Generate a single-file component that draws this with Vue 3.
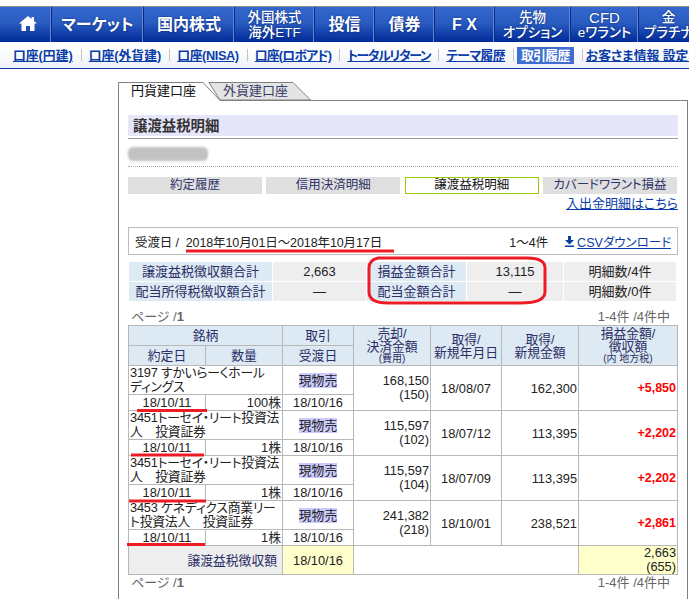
<template>
  <div class="page">
    <nav class="gnav">
      <a class="gnav-item home">
        <svg width="18" height="15" viewBox="0 0 18 15"><path d="M9 0 L12.500 3 V1 H15 V5 L18 7.500 H15.500 V15 H11 V10 H7 V15 H2.500 V7.500 H0 Z" fill="#fff"/></svg>
      </a>
      <a v-for="item in gnav" :key="item.lines[0]" class="gnav-item" :class="{ small: item.lines.length > 1 }">
        <span>
          <span v-for="(line, i) in item.lines" :key="line" class="line" :class="{ big: item.bigFirst && i === 0 }">{{ line }}</span>
        </span>
      </a>
    </nav>

    <div class="subnav">
      <a
        v-for="link in subnav"
        :key="link.label"
        class="sub-link"
        :class="{ active: link.active }"
        :style="{ letterSpacing: (link.ls || 0) + 'px' }"
      >{{ link.label }}</a>
    </div>

    <div class="tabs">
      <svg class="tab-shape" width="200" height="19" viewBox="0 0 200 19">
        <path d="M91 0.500 L175 0.500 L192.500 18 L102 18 Z" fill="#e4e4e4" stroke="#808080"/>
        <path d="M0.500 19 L0.500 0.500 L85 0.500 L102 18.500 L102 19 Z" fill="#fff"/>
        <path d="M0.500 19 L0.500 0.500 L85 0.500 L102 18.500" fill="none" stroke="#808080"/>
      </svg>
      <span class="tab on">円貨建口座</span>
      <span class="tab">外貨建口座</span>
    </div>

    <section class="panel">
      <h2 class="title">譲渡益税明細</h2>
      <div class="masked"></div>
      <div class="dots"></div>

      <div class="btns">
        <span class="btn">約定履歴</span>
        <span class="btn">信用決済明細</span>
        <span class="btn on">譲渡益税明細</span>
        <span class="btn">カバードワラント損益</span>
      </div>
      <div class="io-link"><a>入出金明細はこちら</a></div>

      <div class="period">
        <span class="period-date">受渡日 /&nbsp; 2018年10月01日～2018年10月17日</span>
        <span class="period-count">1～4件</span>
        <a class="csv">
          <svg width="9" height="11" viewBox="0 0 9 11"><path d="M3 0 H6 V4 H9 L4.500 8.500 L0 4 H3 Z M0 9.500 H9 V11 H0 Z" fill="#0b3da8"/></svg>
          <span class="csv-text">CSVダウンロード</span>
        </a>
      </div>

      <div class="summary">
        <template v-for="row in summary" :key="row[0]">
          <span class="s-label">{{ row[0] }}</span>
          <span class="s-val">{{ row[1] }}</span>
          <span class="s-label">{{ row[2] }}</span>
          <span class="s-val">{{ row[3] }}</span>
          <span class="s-val">{{ row[4] }}</span>
        </template>
      </div>

      <div class="pager"><span>ページ /<b>1</b></span><span class="pager-r">1-4件 /4件中</span></div>

      <table class="list">
        <colgroup>
          <col class="c77" /><col class="c77" /><col class="c71" /><col class="c77" /><col class="c71" /><col class="c77" /><col class="c99" />
        </colgroup>
        <thead>
          <tr class="h1">
            <th colspan="2"><div class="cell">銘柄</div></th>
            <th><div class="cell">取引</div></th>
            <th rowspan="2"><div class="cell">売却/<br />決済金額<br /><small>(費用)</small></div></th>
            <th rowspan="2"><div class="cell">取得/<br />新規年月日</div></th>
            <th rowspan="2"><div class="cell">取得/<br />新規金額</div></th>
            <th rowspan="2"><div class="cell">損益金額/<br />徴収額<br /><small>(内 地方税)</small></div></th>
          </tr>
          <tr class="h1">
            <th><div class="cell">約定日</div></th>
            <th><div class="cell">数量</div></th>
            <th><div class="cell">受渡日</div></th>
          </tr>
        </thead>
        <tbody v-for="r in rows" :key="r.acquired + r.cost">
          <tr class="r1">
            <td colspan="2" class="name"><div class="cell">{{ r.name[0] }}<br />{{ r.name[1] }}</div></td>
            <td class="mid"><mark>現物売</mark></td>
            <td rowspan="2" class="num two">{{ r.sale }}<br />({{ r.fee }})</td>
            <td rowspan="2" class="mid">{{ r.acquired }}</td>
            <td rowspan="2" class="num">{{ r.cost }}</td>
            <td rowspan="2" class="num pl">{{ r.pl }}</td>
          </tr>
          <tr class="r2">
            <td class="mid">18/10/11</td>
            <td class="num">{{ r.qty }}</td>
            <td class="mid">18/10/16</td>
          </tr>
        </tbody>
        <tfoot>
          <tr class="total">
            <td colspan="2" class="t-label">譲渡益税徴収額</td>
            <td class="mid yellow">18/10/16</td>
            <td colspan="3"></td>
            <td class="num two yellow">2,663<br />(655)</td>
          </tr>
        </tfoot>
      </table>

      <div class="pager bottom"><span>ページ /<b>1</b></span><span class="pager-r">1-4件 /4件中</span></div>
    </section>

    <!-- red marker annotations on top of the screenshot -->
    <svg class="marks" width="689" height="599" viewBox="0 0 689 599">
      <g fill="none" stroke="#ed1c24" stroke-width="3">
        <path d="M186 251 H394" />
        <path d="M378 258 H527 Q545 258 545 268 V292 Q545 303 520 303 H388 Q369 303 369 292 V268 Q369 260 378 258 Z" />
        <path d="M137 410.500 H207" />
        <path d="M131 455 H204" />
        <path d="M129 501 H206" />
        <path d="M127 544.500 H205" />
      </g>
    </svg>
  </div>
</template>

<script setup>
const gnav = [
  { lines: ['マーケット'] },
  { lines: ['国内株式'] },
  { lines: ['外国株式', '海外ETF'] },
  { lines: ['投信'] },
  { lines: ['債券'] },
  { lines: ['F X'] },
  { lines: ['先物', 'オプション'] },
  { lines: ['CFD', 'eワラント'], bigFirst: true },
  { lines: ['金', 'プラチナ'] }
]

const subnav = [
  { label: '口座(円建)' },
  { label: '口座(外貨建)' },
  { label: '口座(NISA)', ls: -0.4 },
  { label: '口座(ロボアド)', ls: -0.8 },
  { label: 'トータルリターン', ls: -1.3 },
  { label: 'テーマ履歴', ls: -0.6 },
  { label: '取引履歴', active: true, ls: -0.6 },
  { label: 'お客さま情報 設定・変更' }
]

const summary = [
  ['譲渡益税徴収額合計', '2,663', '損益金額合計', '13,115', '明細数/4件'],
  ['配当所得税徴収額合計', '—', '配当金額合計', '—', '明細数/0件']
]

const rows = [
  { name: ['3197 すかいらーくホール', 'ディングス'], sale: '168,150', fee: '150', acquired: '18/08/07', cost: '162,300', pl: '+5,850', qty: '100株' },
  { name: ['3451トーセイ・リート投資法', '人　投資証券'], sale: '115,597', fee: '102', acquired: '18/07/12', cost: '113,395', pl: '+2,202', qty: '1株' },
  { name: ['3451トーセイ・リート投資法', '人　投資証券'], sale: '115,597', fee: '104', acquired: '18/07/09', cost: '113,395', pl: '+2,202', qty: '1株' },
  { name: ['3453 ケネディクス商業リー', 'ト投資法人　投資証券'], sale: '241,382', fee: '218', acquired: '18/10/01', cost: '238,521', pl: '+2,861', qty: '1株' }
]
</script>

<style>
html, body {
  margin: 0;
  overflow: hidden;
  background: #fff;
}
</style>

<style scoped>
.page {
  position: relative;
  width: 689px;
  height: 599px;
  overflow: hidden;
  font-family: "Liberation Sans", "Noto Sans CJK JP", sans-serif;
  font-feature-settings: "palt";
  font-size: 13px;
  color: #222;
  padding-top: 6px;
  box-sizing: border-box;
}

.gnav {
  display: grid;
  grid-template-columns: 52px 92px 91px 80px 60px 60px 60px 76px 68px 60px;
  width: 689px;
  height: 36px;
  border-top: 1px solid #8a8a8a;
  box-sizing: border-box;
  background: linear-gradient(#3468ce, #2a5cc0 45%, #002a98);
}

.gnav-item {
  display: flex;
  align-items: center;
  justify-content: center;
  text-align: center;
  color: #fff;
  font-size: 16px;
  font-weight: 700;
  line-height: 15px;
  border-right: 1px solid #0a2a80;
  box-shadow: inset -1px 0 0 #5f88d8;
  text-shadow: 0 0 2px #06246f;
  white-space: nowrap;
}

.gnav-item.small {
  font-size: 13.500px;
  font-weight: 500;
}

.line {
  display: block;
}

.line.big {
  font-size: 15px;
}

.gnav-item.home {
  padding: 0 0 2px 5px;
  box-sizing: border-box;
}

.subnav {
  display: flex;
  align-items: center;
  height: 27px;
  padding-left: 13px;
  box-sizing: border-box;
  border-bottom: 1px solid #0b3a9c;
  background: linear-gradient(#fff 25%, #eef2f9);
  white-space: nowrap;
}

.sub-link {
  color: #0b3da8;
  font-size: 12.800px;
  font-weight: 700;
  text-decoration: underline;
  line-height: 17px;
  margin-right: 16px;
  position: relative;
}

.sub-link:not(:last-child)::after {
  content: "";
  position: absolute;
  right: -9px;
  top: 2px;
  height: 12px;
  border-right: 1px solid #c4c4c4;
}

.sub-link.active {
  background: #3e6fd0;
  color: #fff;
  text-decoration: none;
  padding: 0 4px;
  margin: 0 12px 0 -4px;
}

.tabs {
  position: relative;
  display: flex;
  height: 18px;
  margin: 13px 0 0 118px;
}

.tab-shape {
  position: absolute;
  left: 0;
  top: 0;
  z-index: 1;
}

.tab {
  position: relative;
  z-index: 2;
  font-size: 13px;
  line-height: 18px;
  width: 92px;
  padding-left: 13px;
  box-sizing: border-box;
  color: #3a3f66;
}

.tab.on {
  color: #111;
}

.panel {
  width: 570px;
  height: 520px;
  margin-left: 118px;
  padding: 14px 9px 0;
  box-sizing: border-box;
  border: 1px solid #808080;
}

.title {
  margin: 0;
  height: 23px;
  padding-left: 5px;
  background: linear-gradient(#e6e6fb 21px, #fff 21px);
  border-bottom: 1px solid #999;
  font-size: 14.400px;
  font-weight: 700;
  line-height: 22px;
  color: #333;
}

.masked {
  width: 80px;
  height: 14px;
  margin-top: 8px;
  background: #c2c2c2;
  border-radius: 5px;
  filter: blur(1px);
}

.dots {
  margin-top: 5px;
  border-top: 1px dotted #aaa;
}

.btns {
  display: grid;
  grid-template-columns: repeat(4, 134px);
  justify-content: space-between;
  width: 549px;
  margin-top: 10px;
}

.btn {
  height: 17px;
  line-height: 17px;
  text-align: center;
  font-size: 12.500px;
  background: #dfdfdf;
  color: #2f3468;
}

.btn.on {
  background: #fff;
  color: #111;
  box-sizing: border-box;
  border: 1px solid #99cc00;
  line-height: 15px;
}

.io-link {
  text-align: right;
  font-size: 13px;
  line-height: 15px;
  margin-top: 2px;
  height: 15px;
}

.io-link a,
.csv-text {
  color: #0b3da8;
  text-decoration: underline;
}

.period {
  display: flex;
  align-items: center;
  height: 28px;
  margin-top: 16px;
  padding: 0 6px;
  box-sizing: border-box;
  border: 1px solid #bbb;
  font-size: 12.500px;
}

.period-date {
  flex: 1;
  letter-spacing: -0.1px;
}

.period-count {
  margin-right: 17px;
}

.csv {
  display: flex;
  align-items: center;
  gap: 3px;
}

.summary {
  display: grid;
  grid-template-columns: 143px 93px 99px 96px 112px;
  grid-auto-rows: 19px;
  gap: 1px;
  margin: 7px 0 0 1px;
  font-size: 13px;
  line-height: 19px;
  text-align: center;
}

.s-label {
  background: #dde9f3;
  color: #2b2f66;
}

.s-val {
  background: #eee;
}

.pager {
  display: flex;
  justify-content: space-between;
  height: 16px;
  margin-top: 8px;
  padding: 0 8px 0 3px;
  font-size: 13px;
  line-height: 16px;
  color: #666;
}

.pager.bottom {
  margin-top: 0;
}

.list {
  table-layout: fixed;
  width: 550px;
  border-collapse: collapse;
  font-size: 12.800px;
}

.c77 { width: 77px; }
.c71 { width: 71px; }
.c99 { width: 99px; }

.list th,
.list td {
  border: 1px solid #b8b8b8;
  padding: 0 1px;
  line-height: 13px;
  overflow: hidden;
}

.list th {
  background: #dde9f3;
  color: #2b2f66;
  font-weight: 400;
  height: 19px;
}

.cell {
  overflow: hidden;
  white-space: nowrap;
}

.list small {
  display: block;
  font-size: 10px;
  height: 12px;
  line-height: 12px;
}

.list .r1 td {
  height: 27px;
}

.list .r2 td {
  height: 15px;
}

.list .name {
  line-height: 14px;
  letter-spacing: -0.2px;
}

.list .name .cell {
  height: 28px;
}

.list .two {
  line-height: 14px;
}

.mid {
  text-align: center;
}

.num {
  text-align: right;
}

.pl {
  color: #f00;
  font-weight: 700;
  font-size: 12.500px;
}

mark {
  background: #ccccff;
  color: #222;
}

.list .total td {
  height: 28px;
}

.list .t-label {
  background: #eee;
  color: #2b2f66;
  text-align: right;
  padding-right: 5px;
}

.list .yellow {
  background: #ffffcc;
}

.marks {
  position: absolute;
  left: 0;
  top: 0;
  pointer-events: none;
}
</style>
